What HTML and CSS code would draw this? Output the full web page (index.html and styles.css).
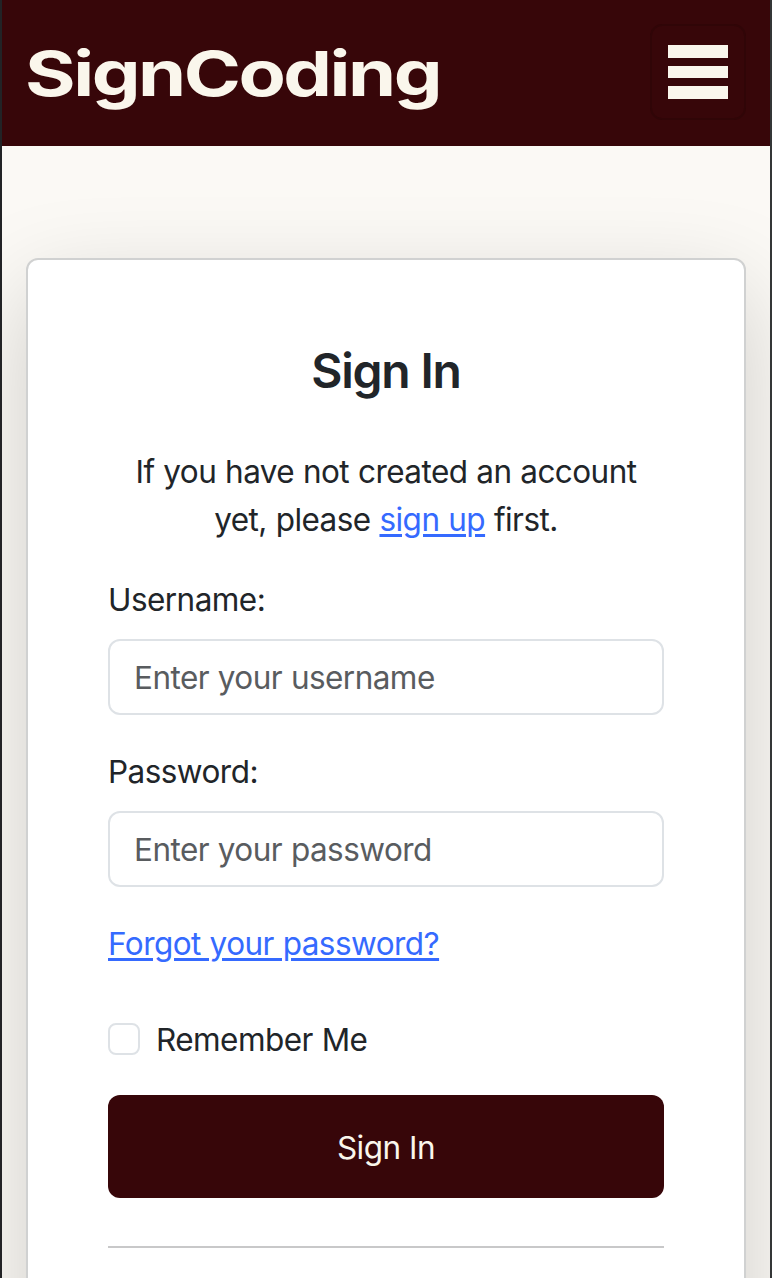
FILE: index.html
```html
<!DOCTYPE html>
<html lang="en">
<head>
  <meta charset="utf-8">
  <title>SignCoding - Sign In</title>
  <link rel="stylesheet" href="styles.css">
</head>
<body>
  <div class="page">
    <header class="navbar">
      <a class="brand" href="#">SignCoding</a>
      <button class="toggler" type="button" aria-label="Toggle navigation">
        <svg class="toggler-icon" viewBox="0 0 60 54" shape-rendering="crispEdges">
          <path d="M0 0h60v13H0zM0 21h60v12H0zM0 41h60v13H0z" fill="#faf6ec"/>
        </svg>
      </button>
    </header>
    <main class="content">
      <section class="card">
        <h1 class="title">Sign In</h1>
        <p class="intro">If you have not created an account<br>yet, please <a class="link" href="#">sign up</a> first.</p>
        <form class="form">
          <label class="label username-label" for="username">Username:</label>
          <input class="field" id="username" type="text" placeholder="Enter your username">
          <label class="label password-label" for="password">Password:</label>
          <input class="field" id="password" type="password" placeholder="Enter your password">
          <a class="link forgot" href="#">Forgot your password?</a>
          <div class="remember">
            <input class="checkbox" id="remember" type="checkbox">
            <label class="remember-label" for="remember">Remember Me</label>
          </div>
          <button class="submit" type="button">Sign In</button>
        </form>
        <hr class="divider">
      </section>
    </main>
  </div>
</body>
</html>
```
FILE: styles.css
```css
* {
  box-sizing: border-box;
}

body {
  margin: 0;
  height: 1278px;
  overflow: hidden;
  color: #212529;
  font: 430 31.5px/48px Inter, "Liberation Sans", sans-serif;
  letter-spacing: -0.55px;
  word-spacing: 0.5px;
}

.page {
  height: 1278px;
  border-left: 2px solid #222326;
  border-right: 2px solid #343637;
  background: #fbf9f5;
  overflow: hidden;
}

.navbar {
  display: flex;
  align-items: center;
  justify-content: space-between;
  height: 146px;
  padding: 0 24px;
  background: #370609;
}

.brand {
  margin: -1px 0 0 -1px;
  color: #faf6ec;
  font-size: 62.5px;
  font-weight: 740;
  line-height: 80px;
  letter-spacing: -2px;
  text-decoration: none;
  transform: scaleX(1.237);
  transform-origin: left center;
}

.toggler {
  display: flex;
  align-items: center;
  justify-content: center;
  width: 96px;
  height: 96px;
  margin-top: -2px;
  padding: 0;
  border: 2px solid #300507;
  border-radius: 12px;
  background: transparent;
}

.toggler-icon {
  display: block;
  width: 60px;
  height: 54px;
}

.content {
  padding: 112px 24px 0;
}

.card {
  height: 1220px;
  padding: 82px 80px 0;
  border: 2px solid #d0d1d1;
  border-radius: 12px;
  background: #fff;
  box-shadow: 0 32px 96px rgba(0, 0, 0, 0.175);
}

.title {
  margin: 0 0 48px;
  font-size: 48px;
  font-weight: 570;
  line-height: 58px;
  letter-spacing: -1.3px;
  text-align: center;
}

.intro {
  margin: 0 0 32px;
  white-space: nowrap;
  text-align: center;
}

.link {
  color: #356aff;
  text-decoration: underline;
  text-decoration-thickness: 3px;
  text-underline-offset: 3px;
}

.form {
  display: flex;
  flex-direction: column;
  align-items: flex-start;
}

.label {
  margin-bottom: 15px;
}

.password-label {
  margin-top: 33px;
}

.field {
  width: 100%;
  height: 76px;
  padding: 1px 24px 0;
  border: 2px solid #dee2e6;
  border-radius: 12px;
  background: #fff;
  color: inherit;
  font: inherit;
  letter-spacing: -0.55px;
  word-spacing: 0.5px;
}

.field::placeholder {
  color: #595c5f;
  opacity: 1;
}

.forgot {
  margin-top: 33px;
}

.remember {
  display: flex;
  align-items: center;
  gap: 16px;
  margin-top: 48px;
}

.checkbox {
  width: 32px;
  height: 32px;
  margin: -2px 0 0;
  border: 2px solid #dee2e6;
  border-radius: 8px;
  background: #fff;
  appearance: none;
}

.submit {
  width: 100%;
  height: 103px;
  margin-top: 31px;
  padding: 2px 0 0;
  border: 0;
  border-radius: 12px;
  background: #370609;
  color: #faf6ec;
  font: inherit;
  letter-spacing: -0.5px;
}

.divider {
  height: 2px;
  margin: 48px 0 0;
  border: 0;
  background: #c8c8c9;
}
```
